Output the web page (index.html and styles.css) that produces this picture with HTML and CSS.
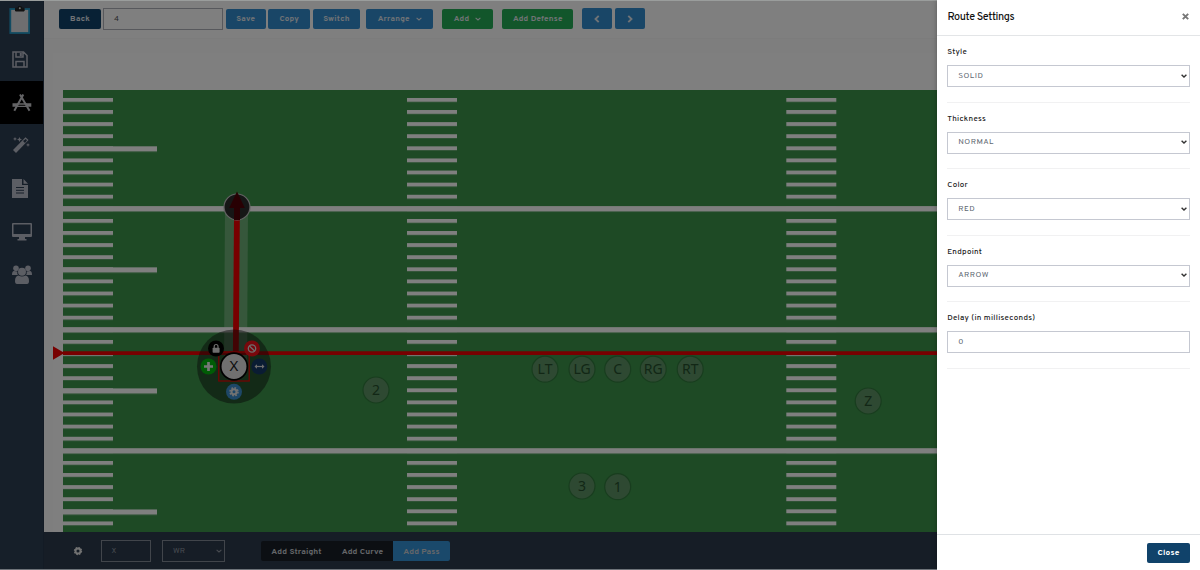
FILE: index.html
```html
<!DOCTYPE html>
<html lang="en">
<head>
<meta charset="utf-8">
<title>Play Designer</title>
<link rel="stylesheet" href="styles.css">
</head>
<body>
<div class="app">
  <nav class="sidebar">
    <a class="nav-item logo"><svg width="22" height="28" viewBox="0 0 22 28"><rect x="1.300" y="3" width="18.800" height="24" fill="#dcdce0" stroke="#2597c4" stroke-width="1.800"/><path d="M6.500 5V2.200h2.200Q9.200 0 10.800 0T12.900 2.200h2.200V5z" fill="#222" stroke="#222"/><circle cx="10.800" cy="2.200" r="1" fill="#ddd"/></svg></a>
    <a class="nav-item"><svg width="16" height="17" viewBox="0 0 16 17" fill="none" stroke="currentColor" stroke-width="1.500"><path d="M1 1h10.500L15 4.500V16H1zM4 1v5h7V1M4 16v-5.500h8V16"/><path d="M8.800 2v3" stroke-width="2"/></svg></a>
    <a class="nav-item active"><svg width="20" height="18" viewBox="0 0 20 18" fill="none" stroke="currentColor"><path d="M11.300.5 2.300 16.800M8 .5l9.500 16.300" stroke-width="2"/><path d="M.5 11h5M14.500 11h4.800" stroke-width="3.400"/><path d="M5 10h10M5 12.400h9" stroke-width="1.300"/></svg></a>
    <a class="nav-item wand"><svg width="18" height="18" viewBox="0 0 18 18" fill="currentColor"><path d="M13.500 1.200 16.500 4 4 17 1 14z"/><path d="m11 5 2 2 2-2.700-1.300-1.200z" fill="#2d3e53"/><path d="m3 1 .6 1.200L5 3l-1.400.6L3 5l-.6-1.400L1 3l1.400-.8zM7.500 1l.8 1.700L10 3.500l-1.700.8L7.500 6l-.8-1.700L5 3.500l1.700-.8zM16 7l.5 1.300L18 9l-1.500.6L16 11l-.5-1.400L14 9l1.500-.7z"/></svg></a>
    <a class="nav-item"><svg width="16" height="19" viewBox="0 0 16 19" fill="currentColor"><path d="M0 0h10v6h6v13H0zM11.500 0 16 4.700h-4.500z"/><path d="M4 8.500h8M4 11.300h8M4 14h8" stroke="#2d3e53"/></svg></a>
    <a class="nav-item"><svg width="20" height="18" viewBox="0 0 20 18" fill="currentColor"><path fill-rule="evenodd" d="M1 0h18q1 0 1 1v12q0 1-1 1h-6v2h1.500v1.500h-9V16H7v-2H1q-1 0-1-1V1q0-1 1-1zm.5 1.500v9.500h17V1.500z"/></svg></a>
    <a class="nav-item"><svg width="20" height="19" viewBox="0 0 20 19" fill="currentColor"><circle cx="4" cy="3.300" r="2.800"/><circle cx="16" cy="3.300" r="2.800"/><path d="M0 10q0-4 2-4l3.300.5Q5 9 6 10zM20 10q0-4-2-4l-3.300.5q.3 2.500-.7 3.500z"/><circle cx="10" cy="6.800" r="4"/><path d="M3 16q0-5 3.500-5.500 3.500 2 7 0Q17 11 17 16q0 3-2 3H5q-2 0-2-3z"/></svg></a>
  </nav>

  <main class="main">
    <header class="toolbar">
      <button class="btn navy back">Back</button>
      <input class="name" value="4">
      <button class="btn blue save">Save</button>
      <button class="btn blue copy">Copy</button>
      <button class="btn blue switch">Switch</button>
      <button class="btn blue arrange">Arrange <svg class="caret" viewBox="0 0 6 4"><path d="m.6.800 2.400 2.200L5.400.8"/></svg></button>
      <button class="btn green add">Add <svg class="caret" viewBox="0 0 6 4"><path d="m.6.800 2.400 2.200L5.400.8"/></svg></button>
      <button class="btn green defense">Add Defense</button>
      <button class="btn blue step"><svg class="chev" viewBox="0 0 6 8"><path d="M4.700.8 1.500 4l3.200 3.200"/></svg></button>
      <button class="btn blue step last"><svg class="chev" viewBox="0 0 6 8"><path d="M1.300.8 4.500 4 1.300 7.200"/></svg></button>
    </header>

    <section class="workspace">
      <div class="card">
        <svg class="field" width="1100" height="479" viewBox="53 53 1100 479">
          <defs>
            <pattern id="ticks" x="0" y="97.950" width="50" height="12.100" patternUnits="userSpaceOnUse"><rect width="50" height="3.900" fill="#fff"/></pattern>
            <pattern id="yards" x="0" y="206.100" width="1200" height="121.050" patternUnits="userSpaceOnUse"><rect width="1200" height="5.400" fill="#fff"/></pattern>
            <pattern id="fives" x="63" y="146.300" width="94" height="121.050" patternUnits="userSpaceOnUse"><rect width="94" height="5.200" fill="#fff"/></pattern>
          </defs>
          <rect x="63" y="90" width="1090" height="442" fill="#3c944a"/>
          <g fill="url(#ticks)">
            <rect width="50" height="434" transform="translate(63 0)" y="97"/>
            <rect width="50" height="434" transform="translate(407 0)" y="97"/>
            <rect width="50" height="434" transform="translate(786.300 0)" y="97"/>
          </g>
          <rect x="63" y="146" width="94" height="384" fill="url(#fives)"/>
          <rect x="63" y="200" width="1090" height="320" fill="url(#yards)"/>
          <path d="M225 207 248 207 247 366 224 366z" fill="#fff" opacity=".25"/>
          <path d="M63 353.100H1153" stroke="#f00000" stroke-width="3.800"/>
          <path d="m52.500 346 12 7.100-12 7z" fill="#f00000"/>
          <path d="M237 207 235.800 355" stroke="#f00000" stroke-width="5.800"/>
          <circle cx="237" cy="207" r="13" fill="#2c2c2c" stroke="#c5c5c5" stroke-width="1.200"/>
          <path d="M237 191.500 244.800 208H240v12h-6v-12h-4.800z" fill="#500006"/>
          <circle cx="234" cy="366.500" r="37" fill="#111" opacity=".48"/>
          <rect x="218.800" y="352" width="30.400" height="29" fill="none" stroke="#f00000" stroke-width="1.200"/>
          <circle cx="234" cy="366.500" r="13.300" fill="#e0e0e0" stroke="#000" stroke-width="1.700"/>
          <text class="mark selected" x="234" y="371.400">X</text>
          <g>
            <circle cx="216" cy="348.500" r="8" fill="#000"/>
            <rect x="212.600" y="347.700" width="7" height="5" rx=".7" fill="#ddd"/><path d="M214.200 348v-1.500q0-2 1.900-2t1.900 2v1.500" fill="none" stroke="#ddd" stroke-width="1.200"/>
            <circle cx="252" cy="348.500" r="8" fill="#f01018"/>
            <circle cx="252" cy="348.500" r="3.700" fill="none" stroke="#ddd" stroke-width="1.300"/><path d="m249.400 346 5.200 5" stroke="#ddd" stroke-width="1.300"/>
            <circle cx="208.500" cy="366.500" r="8" fill="#00b90b"/>
            <path d="M204 366.500h9M208.500 362v9" stroke="#eee" stroke-width="2.700"/>
            <circle cx="259.300" cy="366.500" r="8" fill="#153967"/>
            <path d="M255.500 366.500h8" stroke="#ddd" stroke-width="1.200"/><path d="m257 364.300-2.500 2.200 2.500 2.200zM262 364.300l2.500 2.200-2.500 2.200z" fill="#ddd"/>
            <circle cx="234" cy="391.800" r="8" fill="#3c8ece"/>
            <circle cx="234" cy="391.800" r="2.500" fill="none" stroke="#e5e5e5" stroke-width="2"/><circle cx="234" cy="391.800" r="4" fill="none" stroke="#e5e5e5" stroke-width="1.500" stroke-dasharray="1.700 1.440"/>
          </g>
          <g class="players">
            <circle cx="376" cy="390" r="13"/><circle cx="545" cy="369.200" r="13"/><circle cx="582" cy="369.200" r="13"/><circle cx="617.700" cy="369.200" r="13"/><circle cx="653.200" cy="369.200" r="13"/><circle cx="690.200" cy="369.200" r="13"/><circle cx="868.200" cy="401" r="13"/><circle cx="582" cy="486" r="13"/><circle cx="617.700" cy="486.700" r="13"/>
          </g>
          <g class="mark">
            <text x="376" y="394.500">2</text><text x="545" y="374">LT</text><text x="582" y="374">LG</text><text x="617.700" y="374">C</text><text x="653.200" y="374">RG</text><text x="690.200" y="374">RT</text><text x="868.200" y="405.700">Z</text><text x="582" y="490.500">3</text><text x="617.700" y="491.500">1</text>
          </g>
        </svg>
      </div>
    </section>

    <footer class="bottombar">
      <svg class="gear" width="10" height="10" viewBox="0 0 10 10" fill="none" stroke="#e4e4e4"><circle cx="5" cy="5" r="2.500" stroke-width="1.900"/><circle cx="5" cy="5" r="3.600" stroke-width="1.100" stroke-dasharray="1.600 1.230"/></svg>
      <div class="dark-input pos">X</div>
      <div class="dark-input role">WR <svg class="caret" viewBox="0 0 6 4"><path d="m.6.800 2.400 2.200L5.400.8"/></svg></div>
      <div class="group">
        <button class="seg straight">Add Straight</button><button class="seg curve">Add Curve</button><button class="seg pass">Add Pass</button>
      </div>
    </footer>
  </main>
</div>
<div class="overlay"></div>

<aside class="drawer">
  <header class="drawer-head"><h1>Route Settings</h1><svg width="7" height="7" viewBox="0 0 7 7"><path d="m.8.800 5.400 5.400M6.200.8.800 6.200" stroke="#777" stroke-width="1.900"/></svg></header>
  <div class="drawer-body">
    <div class="setting"><label>Style</label><div class="control"><span>SOLID</span><svg class="arrow" viewBox="0 0 6 4"><path d="m.6.700 2.400 2.300L5.400.7"/></svg></div></div>
    <div class="setting"><label>Thickness</label><div class="control"><span>NORMAL</span><svg class="arrow" viewBox="0 0 6 4"><path d="m.6.700 2.400 2.300L5.400.7"/></svg></div></div>
    <div class="setting"><label>Color</label><div class="control"><span>RED</span><svg class="arrow" viewBox="0 0 6 4"><path d="m.6.700 2.400 2.300L5.400.7"/></svg></div></div>
    <div class="setting"><label>Endpoint</label><div class="control"><span>ARROW</span><svg class="arrow" viewBox="0 0 6 4"><path d="m.6.700 2.400 2.300L5.400.7"/></svg></div></div>
    <div class="setting"><label>Delay (in milliseconds)</label><div class="control"><span>0</span></div></div>
  </div>
  <footer class="drawer-foot"><button class="btn navy close">Close</button></footer>
</aside>
</body>
</html>
```
FILE: styles.css
```css
* { box-sizing: border-box; }
body { margin: 0; width: 1200px; height: 570px; overflow: hidden; position: relative; font-family: Overpass, Inter, "Open Sans", sans-serif; font-size: 8px; }
button, input { font: inherit; margin: 0; }
.app { display: flex; height: 570px; background: #fff; }
.sidebar { width: 44px; flex: none; background: #2d3e53; color: #b9bcc8; display: flex; flex-direction: column; border-right: 1px solid #26364a; }
.nav-item { height: 43px; display: flex; align-items: center; padding-left: 12px; }
.nav-item.logo { height: 38px; padding: 1px 0 0 9px; }
.nav-item.active { background: #000; color: #c8c8cc; }
.nav-item.wand { padding-bottom: 2px; }
.main { flex: 1; min-width: 0; display: flex; flex-direction: column; }

.toolbar { height: 39px; flex: none; display: flex; align-items: flex-start; padding: 8.5px 0 0 15px; border-bottom: 1px solid #f8f8f8; }
.btn { height: 20px; border: 0; border-radius: 2px; padding: 0; color: #fff; font-weight: 700; font-size: 8px; letter-spacing: .24px; display: flex; align-items: center; justify-content: center; flex: none; white-space: nowrap; }
.navy { background: #10426a; }
.toolbar .btn { color: #e0e6ec; }
.blue { background: #3492d6; }
.green { background: #24ad56; }
.toolbar .blue { background: #328ccf; }
.back { width: 42px; margin-right: 2px; }
.name { width: 120px; height: 22px; margin: -.5px 3px 0 0; border: 1px solid #aeb0b8; padding: 0 10px; background: #fff; color: #555; font-size: 8px; border-radius: 0; }
.save { width: 39.500px; margin-right: 2.800px; }
.copy { width: 42px; margin-right: 2.700px; }
.switch { width: 47px; margin-right: 6px; }
.arrange { width: 67.500px; margin-right: 8.500px; }
.add { width: 51px; margin-right: 9px; }
.defense { width: 71.500px; margin-right: 8.500px; }
.step { width: 30px; height: 21px; margin: -.5px 3px 0 0; }
.caret { width: 6px; height: 4px; margin-left: 6px; fill: none; stroke: currentColor; stroke-width: 1.100; }
.chev { width: 6px; height: 8px; fill: none; stroke: #e0e6ec; stroke-width: 1.900; }

.workspace { flex: 1; min-height: 0; background: #fcfcfc; padding: 14px 0 0 9px; }
.card { height: 479px; background: #fff; overflow: hidden; }
.field { display: block; }
.mark { font-family: "Noto Sans", sans-serif; font-size: 14px; fill: #244f2c; text-anchor: middle; }
.selected { fill: #222; font-size: 15px; }
.players { fill: #67916d; fill-opacity: .75; stroke: #317a3d; stroke-width: 1.200; }

.bottombar { height: 38px; flex: none; background: #2d3b4d; display: flex; align-items: center; padding-left: 28.500px; }
.gear { margin-right: 18px; }
.dark-input { height: 22px; border: 1px solid #828b96; color: #9097a1; display: flex; align-items: center; justify-content: space-between; padding-left: 10px; font-size: 8px; letter-spacing: .2px; }
.pos { width: 50.500px; margin-right: 11px; }
.role { width: 63px; padding-right: 2px; margin-right: 36px; }
.group { display: flex; height: 20px; background: #181f27; border-radius: 2px; overflow: hidden; }
.seg { border: 0; padding: 1px 0 0; background: transparent; color: #c9cdd2; font-weight: 700; font-size: 8.300px; letter-spacing: .14px; white-space: nowrap; }
.straight { width: 71px; }
.curve { width: 61px; }
.pass { width: 57px; background: #3492d6; }

.overlay { position: absolute; inset: 0; background: rgba(0, 0, 0, .5); border-top: 1px solid #9a9d9c; border-bottom: 1px solid #6e7379; }
.drawer { position: absolute; top: 0; right: 0; width: 262.600px; height: 570px; background: #fff; display: flex; flex-direction: column; box-shadow: 0 0 5px rgba(0, 0, 0, .3); }
.drawer-head { height: 36px; flex: none; border-bottom: 1px solid #e3e5e7; display: flex; justify-content: space-between; align-items: center; padding: 0 11px 3px 10px; }
.drawer-head h1 { margin: 1.500px 0 0; font-size: 10.800px; font-weight: 500; letter-spacing: -.38px; color: #111; }
.drawer-body { flex: 1; padding: 0 10px 0 9.800px; }
.setting { height: 66.600px; padding-top: 11px; border-bottom: 1px solid #f1f1f2; }
.setting label { display: block; height: 11px; line-height: 11px; margin-bottom: 7px; font-size: 8px; letter-spacing: .27px; font-weight: 500; color: #222; white-space: nowrap; }
.control { height: 22px; border: 1px solid #c5c8d1; display: flex; align-items: center; justify-content: space-between; padding: 0 2px 1px 10px; color: #606872; font-size: 8px; letter-spacing: .5px; }
.arrow { width: 6px; height: 4px; fill: none; stroke: #333; stroke-width: 1.400; }
.drawer-foot { height: 36px; flex: none; border-top: 1px solid #dfe2e5; display: flex; justify-content: flex-end; align-items: center; padding-right: 10px; }
.close { width: 43px; font-size: 8.300px; }
```
